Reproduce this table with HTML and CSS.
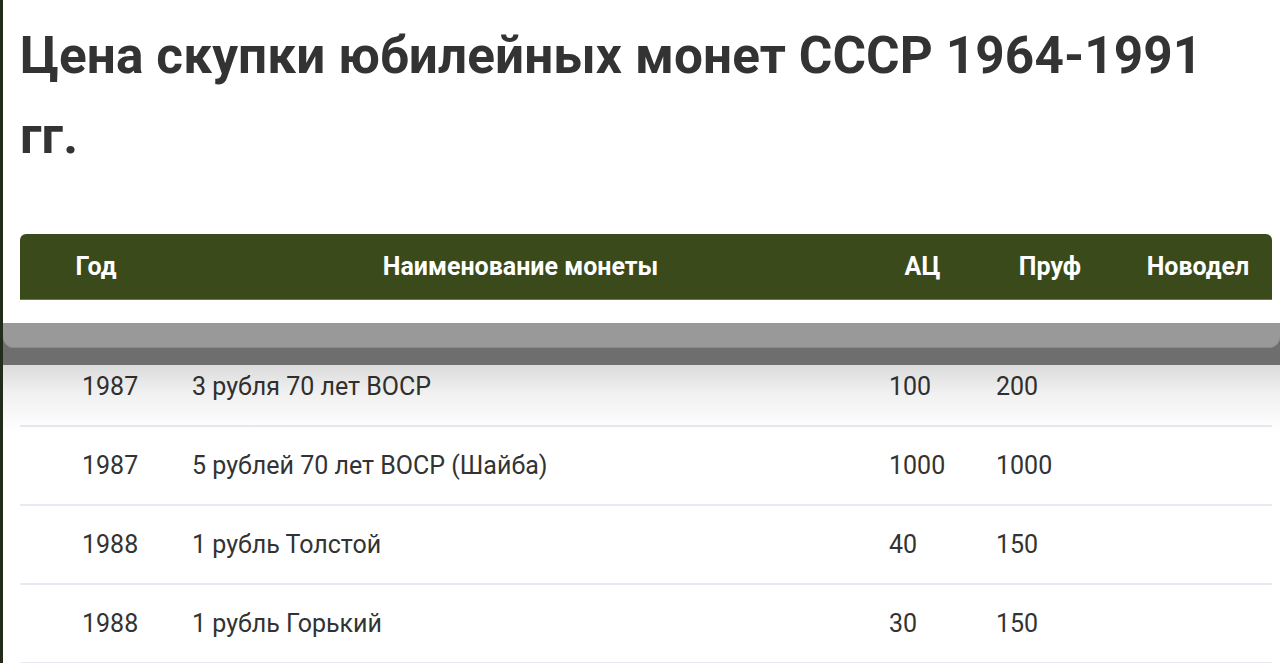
FILE: index.html
```html
<!DOCTYPE html>
<html lang="ru">
<head>
<meta charset="utf-8">
<title>Цена скупки юбилейных монет СССР 1964-1991 гг.</title>
<link rel="stylesheet" href="styles.css">
</head>
<body>
<div class="page">
  <h1 class="title">Цена скупки юбилейных монет СССР 1964-1991 гг.</h1>
  <div class="table">
    <div class="row head">
      <div class="c c-year">Год</div>
      <div class="c c-name">Наименование монеты</div>
      <div class="c c-ac">АЦ</div>
      <div class="c c-proof">Пруф</div>
      <div class="c c-new">Новодел</div>
    </div>
    <div class="body">
      <div class="row">
        <div class="c c-year">1987</div>
        <div class="c c-name">3 рубля 70 лет ВОСР</div>
        <div class="c c-ac">100</div>
        <div class="c c-proof">200</div>
        <div class="c c-new"></div>
      </div>
      <div class="row">
        <div class="c c-year">1987</div>
        <div class="c c-name">5 рублей 70 лет ВОСР (Шайба)</div>
        <div class="c c-ac">1000</div>
        <div class="c c-proof">1000</div>
        <div class="c c-new"></div>
      </div>
      <div class="row">
        <div class="c c-year">1988</div>
        <div class="c c-name">1 рубль Толстой</div>
        <div class="c c-ac">40</div>
        <div class="c c-proof">150</div>
        <div class="c c-new"></div>
      </div>
      <div class="row">
        <div class="c c-year">1988</div>
        <div class="c c-name">1 рубль Горький</div>
        <div class="c c-ac">30</div>
        <div class="c c-proof">150</div>
        <div class="c c-new"></div>
      </div>
    </div>
  </div>
</div>
<div class="overlay">
  <div class="overlay-bar"></div>
  <div class="overlay-band"></div>
  <div class="overlay-shadow"></div>
</div>
</body>
</html>
```

FILE: styles.css
```css
html, body {
  margin: 0;
  padding: 0;
}
body {
  background: #232c1c;
  font-family: Roboto, "Liberation Sans", Arial, sans-serif;
  color: #333333;
  height: 663px;
  overflow: hidden;
  position: relative;
}
.page {
  margin-left: 3px;
  background: #ffffff;
  padding: 16px 8px 0 17px;
  min-height: 663px;
  box-sizing: border-box;
}
.title {
  margin: 0;
  font-size: 51.3px;
  line-height: 80px;
  font-weight: 700;
  color: #333333;
  letter-spacing: 0.1px;
}
.table {
  margin-top: 58px;
}
.row {
  display: grid;
  grid-template-columns: 152px 697px 107px 148px 148px;
  align-items: center;
}
.head {
  height: 66px;
  background: #3a4a1b;
  border-radius: 6px 6px 0 0;
  border-bottom: 1px solid #6a7a4e;
  box-sizing: border-box;
  color: #ffffff;
  font-weight: 700;
  font-size: 25px;
}
.head .c {
  text-align: center;
}
.body {
  margin-top: 48px;
}
.body .row {
  height: 79px;
  border-bottom: 2px solid #e9e9f3;
  box-sizing: border-box;
  font-size: 25px;
  color: #333333;
}
.body .c {
  padding-left: 20px;
}
.body .c-year {
  padding-left: 62px;
}
.overlay {
  position: absolute;
  top: 323px;
  left: 3px;
  right: 0;
  height: 110px;
  pointer-events: none;
}
.overlay-bar {
  position: absolute;
  top: 0;
  left: 0;
  right: 0;
  height: 25px;
  background: #999999;
  border-radius: 0 0 11px 11px;
  z-index: 2;
  box-shadow: inset 0 -1px 0 #8c8c8c;
}
.overlay-band {
  position: absolute;
  top: 0;
  left: 0;
  right: 0;
  height: 42px;
  background: #6e6e6e;
  z-index: 1;
}
.overlay-shadow {
  position: absolute;
  top: 42px;
  left: 0;
  right: 0;
  height: 68px;
  background: linear-gradient(to bottom, rgba(0,0,0,0.14), rgba(0,0,0,0.06) 40%, rgba(0,0,0,0));
}
```
